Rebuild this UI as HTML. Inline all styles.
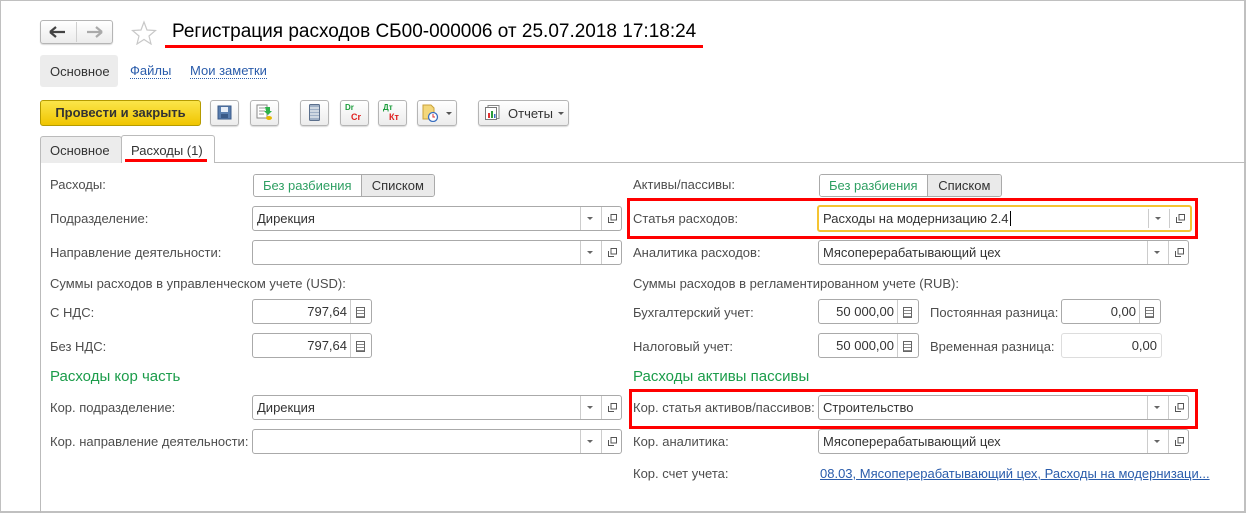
<!DOCTYPE html>
<html><head><meta charset="utf-8"><style>
*{box-sizing:border-box;margin:0;padding:0}
body{width:1246px;height:513px;background:#fff;font-family:"Liberation Sans",sans-serif;font-size:13px;color:#4d4d4d;position:relative;overflow:hidden}
.a{position:absolute}
.win{left:0;top:0;width:1246px;height:513px;border:1px solid #c0c0c0;border-right:2px solid #c0c0c0;border-bottom:2px solid #c0c0c0}
.btn{border:1px solid #b5b5b5;border-radius:3px;background:linear-gradient(#fff,#ececec);box-shadow:0 1px 1px rgba(0,0,0,.15)}
.lbl{color:#4d4d4d;white-space:nowrap}
.fld{border:1px solid #aaa;border-radius:3px;background:#fff;height:25px}
.fld .t{position:absolute;left:4px;top:4px;color:#333;font-size:13px;white-space:nowrap}
.fld .s1,.fld .s2{position:absolute;top:0;bottom:0;border-left:1px solid #ccc}
.dd{position:absolute;top:10px;width:0;height:0;border-left:3px solid transparent;border-right:3px solid transparent;border-top:3px solid #666}
.cp{position:absolute;top:7px;width:9px;height:9px}
.num .t{left:auto;right:24px;color:#333}
.cal{position:absolute;right:6px;top:7px;width:9px;height:11px;border:1px solid #666;background:repeating-linear-gradient(#fff 0 2px,#888 2px 3px)}
.grn{color:#1b9c4a;font-size:15px}
.tg{height:23px;border:1px solid #aaa;border-radius:3px;display:flex;overflow:hidden}
.tg div{padding:3px 9px;font-size:13px}
.tg .g{color:#2e9f62;background:#fff;border-right:1px solid #aaa}
.tg .s{color:#333;background:#eaeaea;flex:1;text-align:center}
.red{border:3px solid #f00}
</style></head><body>
<div class="a win"></div>

<!-- nav -->
<div class="a btn" style="left:40px;top:20px;width:73px;height:24px"></div>
<div class="a" style="left:76px;top:22px;width:1px;height:20px;background:#d0d0d0"></div>
<svg class="a" style="left:48px;top:25px" width="20" height="14"><path d="M2 7H17M2 7L8 2M2 7L8 12" stroke="#444" stroke-width="2.2" fill="none"/></svg>
<svg class="a" style="left:85px;top:25px" width="20" height="14"><path d="M2 7H17M17 7L11 2M17 7L11 12" stroke="#aaa" stroke-width="2.2" fill="none"/></svg>
<svg class="a" style="left:131px;top:20px" width="26" height="25"><path d="M13 2L16 10L24.5 10.5L18 16L20 24L13 19.5L6 24L8 16L1.5 10.5L10 10Z" fill="none" stroke="#c8c8c8" stroke-width="1.2"/></svg>
<div class="a" style="left:172px;top:21px;font-size:19px;color:#000;white-space:nowrap">Регистрация расходов СБ00-000006 от 25.07.2018 17:18:24</div>
<div class="a" style="left:165px;top:45px;width:538px;height:3px;background:#f00"></div>

<!-- section tabs -->
<div class="a" style="left:40px;top:55px;width:78px;height:32px;background:#ececec;border-radius:3px"></div>
<div class="a" style="left:50px;top:64px;color:#333">Основное</div>
<div class="a" style="left:130px;top:64px;color:#2a5cab;border-bottom:1px dotted #2a5cab;line-height:14px">Файлы</div>
<div class="a" style="left:190px;top:64px;color:#2a5cab;border-bottom:1px dotted #2a5cab;line-height:14px">Мои заметки</div>

<!-- toolbar -->
<div class="a" style="left:40px;top:100px;width:161px;height:26px;border:1px solid #b59b00;border-radius:3px;background:linear-gradient(#fbe54a,#f0c500);font-weight:bold;color:#333;text-align:center;line-height:24px">Провести и закрыть</div>
<div class="a btn" style="left:210px;top:100px;width:29px;height:26px"></div>
<svg class="a" style="left:217px;top:105px" width="15" height="15"><rect x="1" y="1" width="13" height="13" fill="#5a7fb0" stroke="#3a5a88"/><rect x="4" y="2" width="7" height="5" fill="#e8eef8"/><rect x="4" y="9" width="7" height="4" fill="#3a5a88"/></svg>
<div class="a btn" style="left:250px;top:100px;width:29px;height:26px"></div>
<svg class="a" style="left:256px;top:104px" width="17" height="17"><rect x="1" y="1" width="10" height="13" fill="#fff" stroke="#888"/><path d="M3 4h6M3 7h6M3 10h5" stroke="#999"/><path d="M9 3h5v4h2l-4 4-4-4h2z" fill="#2db24a"/><ellipse cx="13" cy="14" rx="3" ry="2" fill="#e6b800"/></svg>
<div class="a btn" style="left:300px;top:100px;width:29px;height:26px"></div>
<svg class="a" style="left:309px;top:104px" width="11" height="17"><rect x="0.5" y="0.5" width="10" height="16" rx="1" fill="#9fb0c6" stroke="#5b6f8c"/><path d="M1 4h9M1 7h9M1 10h9M1 13h9" stroke="#fff"/></svg>
<div class="a btn" style="left:340px;top:100px;width:29px;height:26px"></div>
<div class="a" style="left:345px;top:103px;font-size:8px;font-weight:bold;color:#1a9c3a">Dr</div>
<div class="a" style="left:351px;top:112px;font-size:9px;font-weight:bold;color:#e02020">Cr</div>
<div class="a btn" style="left:378px;top:100px;width:29px;height:26px"></div>
<div class="a" style="left:383px;top:103px;font-size:8px;font-weight:bold;color:#1a9c3a">Дт</div>
<div class="a" style="left:389px;top:112px;font-size:9px;font-weight:bold;color:#e02020">Кт</div>
<div class="a btn" style="left:417px;top:100px;width:40px;height:26px"></div>
<svg class="a" style="left:422px;top:104px" width="18" height="18"><path d="M1 1h8l3 3v11H1z" fill="#f3d77a" stroke="#c9a23a"/><circle cx="11" cy="13" r="4.5" fill="#fff" stroke="#3a6fc0" stroke-width="1.3"/><path d="M11 10v3h2" stroke="#e03030" fill="none"/></svg>
<div class="a" style="left:446px;top:112px;border-left:3px solid transparent;border-right:3px solid transparent;border-top:3px solid #555"></div>
<div class="a btn" style="left:478px;top:100px;width:91px;height:26px"></div>
<svg class="a" style="left:485px;top:105px" width="15" height="15"><rect x="3" y="0.5" width="11" height="13" fill="#fff" stroke="#888"/><rect x="0.5" y="2.5" width="11" height="12" fill="#fff" stroke="#777"/><rect x="3" y="8" width="2" height="5" fill="#e03030"/><rect x="6" y="6" width="2" height="7" fill="#2a9c3a"/><rect x="9" y="9" width="1.5" height="4" fill="#3a6fc0"/></svg>
<div class="a" style="left:508px;top:106px;color:#333">Отчеты</div>
<div class="a" style="left:558px;top:112px;border-left:3px solid transparent;border-right:3px solid transparent;border-top:3px solid #555"></div>

<!-- tabs -->
<div class="a" style="left:40px;top:162px;width:1206px;height:1px;background:#bbb"></div>
<div class="a" style="left:40px;top:162px;width:1px;height:351px;background:#bbb"></div>
<div class="a" style="left:40px;top:136px;width:82px;height:27px;background:#ececec;border:1px solid #bbb;border-bottom:none;border-radius:3px 3px 0 0"></div>
<div class="a" style="left:50px;top:143px;color:#333">Основное</div>
<div class="a" style="left:121px;top:135px;width:94px;height:28px;background:#fff;border:1px solid #bbb;border-bottom:none;border-radius:3px 3px 0 0"></div>
<div class="a" style="left:131px;top:143px;color:#333">Расходы (1)</div>
<div class="a" style="left:125px;top:159px;width:82px;height:3px;background:#f00"></div>

<!-- left column -->
<div class="a lbl" style="left:50px;top:177px">Расходы:</div>
<div class="a tg" style="left:253px;top:174px;width:182px"><div class="g">Без разбиения</div><div class="s">Списком</div></div>

<div class="a lbl" style="left:50px;top:211px">Подразделение:</div>
<div class="a fld" style="left:252px;top:206px;width:370px"><span class="t">Дирекция</span><span class="s1" style="left:327px"></span><span class="dd" style="left:334px"></span><span class="s2" style="left:348px"></span><svg class="cp" style="left:355px" viewBox="0 0 9 9"><path d="M3 .5h5.5v5.5H3zM.5 3v5.5H6" fill="none" stroke="#555"/></svg></div>

<div class="a lbl" style="left:50px;top:245px">Направление деятельности:</div>
<div class="a fld" style="left:252px;top:240px;width:370px"><span class="s1" style="left:327px"></span><span class="dd" style="left:334px"></span><span class="s2" style="left:348px"></span><svg class="cp" style="left:355px" viewBox="0 0 9 9"><path d="M3 .5h5.5v5.5H3zM.5 3v5.5H6" fill="none" stroke="#555"/></svg></div>

<div class="a lbl" style="left:50px;top:276px">Суммы расходов в управленческом учете (USD):</div>
<div class="a lbl" style="left:50px;top:305px">С НДС:</div>
<div class="a fld num" style="left:252px;top:299px;width:120px"><span class="t">797,64</span><span class="s1" style="left:97px"></span><span class="cal"></span></div>
<div class="a lbl" style="left:50px;top:339px">Без НДС:</div>
<div class="a fld num" style="left:252px;top:333px;width:120px"><span class="t">797,64</span><span class="s1" style="left:97px"></span><span class="cal"></span></div>

<div class="a grn" style="left:50px;top:368px">Расходы кор часть</div>
<div class="a lbl" style="left:50px;top:400px">Кор. подразделение:</div>
<div class="a fld" style="left:252px;top:395px;width:370px"><span class="t">Дирекция</span><span class="s1" style="left:327px"></span><span class="dd" style="left:334px"></span><span class="s2" style="left:348px"></span><svg class="cp" style="left:355px" viewBox="0 0 9 9"><path d="M3 .5h5.5v5.5H3zM.5 3v5.5H6" fill="none" stroke="#555"/></svg></div>
<div class="a lbl" style="left:50px;top:434px">Кор. направление деятельности:</div>
<div class="a fld" style="left:252px;top:429px;width:370px"><span class="s1" style="left:327px"></span><span class="dd" style="left:334px"></span><span class="s2" style="left:348px"></span><svg class="cp" style="left:355px" viewBox="0 0 9 9"><path d="M3 .5h5.5v5.5H3zM.5 3v5.5H6" fill="none" stroke="#555"/></svg></div>

<!-- right column -->
<div class="a lbl" style="left:633px;top:177px">Активы/пассивы:</div>
<div class="a tg" style="left:819px;top:174px;width:183px"><div class="g">Без разбиения</div><div class="s">Списком</div></div>

<div class="a red" style="left:627px;top:198px;width:571px;height:41px"></div>
<div class="a lbl" style="left:633px;top:211px">Статья расходов:</div>
<div class="a fld" style="left:817px;top:205px;width:375px;height:27px;border:2px solid #f5c431"><span class="t">Расходы на модернизацию 2.4<span style="border-left:1px solid #000;margin-left:1px"></span></span><span class="s1" style="left:329px;top:2px;bottom:2px"></span><span class="dd" style="left:336px"></span><span class="s2" style="left:350px;top:2px;bottom:2px"></span><svg class="cp" style="left:357px" viewBox="0 0 9 9"><path d="M3 .5h5.5v5.5H3zM.5 3v5.5H6" fill="none" stroke="#555"/></svg></div>

<div class="a lbl" style="left:633px;top:245px">Аналитика расходов:</div>
<div class="a fld" style="left:818px;top:240px;width:371px"><span class="t">Мясоперерабатывающий цех</span><span class="s1" style="left:328px"></span><span class="dd" style="left:335px"></span><span class="s2" style="left:349px"></span><svg class="cp" style="left:356px" viewBox="0 0 9 9"><path d="M3 .5h5.5v5.5H3zM.5 3v5.5H6" fill="none" stroke="#555"/></svg></div>

<div class="a lbl" style="left:633px;top:276px">Суммы расходов в регламентированном учете (RUB):</div>
<div class="a lbl" style="left:633px;top:305px">Бухгалтерский учет:</div>
<div class="a fld num" style="left:818px;top:299px;width:101px"><span class="t">50 000,00</span><span class="s1" style="left:78px"></span><span class="cal"></span></div>
<div class="a lbl" style="left:930px;top:305px">Постоянная разница:</div>
<div class="a fld num" style="left:1061px;top:299px;width:100px"><span class="t">0,00</span><span class="s1" style="left:77px"></span><span class="cal"></span></div>
<div class="a lbl" style="left:633px;top:339px">Налоговый учет:</div>
<div class="a fld num" style="left:818px;top:333px;width:101px"><span class="t">50 000,00</span><span class="s1" style="left:78px"></span><span class="cal"></span></div>
<div class="a lbl" style="left:930px;top:339px">Временная разница:</div>
<div class="a fld" style="left:1061px;top:333px;width:101px;border-color:#ddd"><span class="t" style="left:auto;right:4px">0,00</span></div>

<div class="a grn" style="left:633px;top:368px">Расходы активы пассивы</div>
<div class="a red" style="left:629px;top:389px;width:569px;height:40px"></div>
<div class="a lbl" style="left:633px;top:400px">Кор. статья активов/пассивов:</div>
<div class="a fld" style="left:818px;top:395px;width:371px"><span class="t">Строительство</span><span class="s1" style="left:328px"></span><span class="dd" style="left:335px"></span><span class="s2" style="left:349px"></span><svg class="cp" style="left:356px" viewBox="0 0 9 9"><path d="M3 .5h5.5v5.5H3zM.5 3v5.5H6" fill="none" stroke="#555"/></svg></div>
<div class="a lbl" style="left:633px;top:434px">Кор. аналитика:</div>
<div class="a fld" style="left:818px;top:429px;width:371px"><span class="t">Мясоперерабатывающий цех</span><span class="s1" style="left:328px"></span><span class="dd" style="left:335px"></span><span class="s2" style="left:349px"></span><svg class="cp" style="left:356px" viewBox="0 0 9 9"><path d="M3 .5h5.5v5.5H3zM.5 3v5.5H6" fill="none" stroke="#555"/></svg></div>
<div class="a lbl" style="left:633px;top:466px">Кор. счет учета:</div>
<div class="a" style="left:820px;top:466px;color:#2a5cab;text-decoration:underline;white-space:nowrap">08.03, Мясоперерабатывающий цех, Расходы на модернизаци...</div>
</body></html>
